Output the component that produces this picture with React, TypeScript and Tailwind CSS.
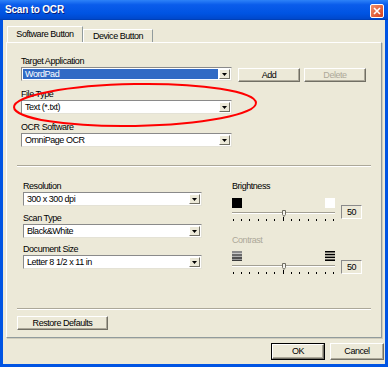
import React from "react";

const font = "font-['Liberation_Sans',Arial,sans-serif]";
const txt = "text-[9px] tracking-[-0.45px] leading-none";

function Combo({ value, className, selected }: { value: string; className: string; selected?: boolean }) {
  return (
    <div
      className={`flex h-[14px] items-stretch border border-t-[#8a8a8a] border-l-[#8a8a8a] border-b-[#e4e2d6] border-r-[#e4e2d6] bg-white ${className}`}
    >
      <div className="flex flex-1 p-[1px]">
        <div className={`flex flex-1 items-center pl-[2px] ${txt} ${selected ? "bg-[#316ac5] text-white" : "text-black"}`}>
          {value}
        </div>
      </div>
      <div className="my-[1px] mr-[1px] flex w-[11px] items-center justify-center border border-t-white border-l-white border-b-[#716f64] border-r-[#716f64] bg-[#ece9d8]">
        <svg width="5" height="3" viewBox="0 0 5 3">
          <path d="M0 0h5L2.5 3z" fill="#000" />
        </svg>
      </div>
    </div>
  );
}

function Button({ children, className, disabled, isDefault }: { children: React.ReactNode; className: string; disabled?: boolean; isDefault?: boolean }) {
  const inner = (
    <div
      className={`flex h-full w-full items-center justify-center border border-t-white border-l-white border-b-[#716f64] border-r-[#716f64] bg-[#ece9d8] shadow-[inset_-1px_-1px_0_#aca899] ${txt} ${
        disabled ? "text-[#aca899]" : "text-black"
      }`}
    >
      {children}
    </div>
  );
  if (isDefault) {
    return <div className={`border border-black ${className}`}>{inner}</div>;
  }
  return <div className={className}>{inner}</div>;
}

function Label({ children, gray }: { children: React.ReactNode; gray?: boolean }) {
  return <div className={`flex h-[12px] items-center ${txt} ${gray ? "text-[#aca899]" : "text-black"}`}>{children}</div>;
}

function Separator({ className }: { className: string }) {
  return <div className={`h-[2px] border-t border-t-[#aca899] border-b border-b-white ${className}`} />;
}

function Slider() {
  const ticks = Array.from({ length: 13 }, (_, i) => 0.5 + i * 8.37);
  return (
    <svg width="104" height="14" viewBox="0 0 104 14" className="block">
      <line x1="0" y1="3.5" x2="103" y2="3.5" stroke="#a3a094" />
      <line x1="0" y1="4.5" x2="103" y2="4.5" stroke="#ffffff" />
      <path d="M50.5 1.5h3v4l-1.5 2l-1.5-2z" fill="#f4f3ee" stroke="#6f6d62" />
      {ticks.map((x, i) => (
        <rect key={i} x={Math.round(x)} y={i === 6 ? 8 : 10} width="1" height={i === 6 ? 4 : 2} fill="#000" />
      ))}
    </svg>
  );
}

function ValueBox({ className }: { className: string }) {
  return (
    <div
      className={`flex h-[14px] w-[21px] items-center justify-center border border-t-[#8a8a8a] border-l-[#8a8a8a] border-b-white border-r-white text-black ${txt} ${className}`}
    >
      50
    </div>
  );
}

export default function App() {
  return (
    <div className={`relative flex h-[367px] w-[388px] flex-col bg-[#0054e3] ${font}`}>
      {/* title bar */}
      <div className="flex h-[20px] items-center justify-between border-b border-b-[#0040b8] bg-[linear-gradient(#2d82f8_0%,#0a5ceb_25%,#0054e3_70%,#0048cc_100%)] pl-[5px] pr-[4px]">
        <span className="text-[10px] font-bold tracking-[-0.2px] text-white [text-shadow:1px_1px_0_#0a1e7a]">Scan to OCR</span>
        <div className="mt-[2px] flex h-[14px] w-[14px] items-center justify-center rounded-[2px] border border-white bg-[linear-gradient(135deg,#f0906a,#d8401c)]">
          <svg width="8" height="8" viewBox="0 0 8 8">
            <path d="M1 1l6 6M7 1L1 7" stroke="#fff" strokeWidth="1.6" />
          </svg>
        </div>
      </div>

      {/* body */}
      <div className="mx-[3px] mb-[3px] flex flex-1 flex-col bg-[#ece9d8]">
        {/* tabs */}
        <div className="mt-[6px] flex h-[16px] items-end pl-[4px]">
          <div className={`flex h-[16px] w-[76px] items-center justify-center border border-b-0 border-t-white border-l-white border-r-[#919b9c] bg-[#ece9d8] text-black ${txt}`}>
            Software Button
          </div>
          <div className={`flex h-[13px] w-[70px] items-center justify-center border border-b-0 border-t-white border-l-white border-r-[#919b9c] text-black ${txt}`}>
            Device Button
          </div>
        </div>

        {/* panel */}
        <div className="ml-[3px] flex h-[296px] w-[376px] flex-col border border-t-white border-l-white border-b-[#919b9c] border-r-[#919b9c] shadow-[1px_1px_0_#d0cdbd]">
          <div className="ml-[14px] mt-[12px] flex flex-col">
            <Label>Target Application</Label>
            <div className="flex items-start">
              <Combo value="WordPad" selected className="w-[211px]" />
              <Button className="ml-[6px] mt-[1px] h-[14px] w-[62px]">Add</Button>
              <Button disabled className="ml-[4px] mt-[1px] h-[14px] w-[62px]">
                Delete
              </Button>
            </div>
            <div className="mt-[6px]">
              <Label>File Type</Label>
            </div>
            <Combo value="Text (*.txt)" className="w-[211px]" />
            <div className="mt-[7px]">
              <Label>OCR Software</Label>
            </div>
            <Combo value="OmniPage OCR" className="w-[211px]" />
          </div>

          <Separator className="mx-[10px] mt-[18px]" />

          <div className="mt-[13px] flex">
            <div className="ml-[16px] flex w-[179px] flex-col">
              <Label>Resolution</Label>
              <Combo value="300 x 300 dpi" className="w-[179px]" />
              <div className="mt-[6px]">
                <Label>Scan Type</Label>
              </div>
              <Combo value="Black&White" className="w-[179px]" />
              <div className="mt-[5px]">
                <Label>Document Size</Label>
              </div>
              <Combo value="Letter 8 1/2 x 11 in" className="w-[179px]" />
            </div>

            <div className="ml-[30px] flex flex-col">
              <Label>Brightness</Label>
              <div className="flex items-start">
                <div className="flex flex-col">
                  <div className="mt-[6px] flex h-[10px] w-[104px] justify-between pr-[1px]">
                    <div className="h-[10px] w-[10px] bg-black" />
                    <div className="h-[10px] w-[10px] bg-white" />
                  </div>
                  <div className="mt-[1px]">
                    <Slider />
                  </div>
                </div>
                <ValueBox className="ml-[5px] mt-[13px]" />
              </div>

              <div className="mt-[11px]">
                <Label gray>Contrast</Label>
              </div>
              <div className="flex items-start">
                <div className="flex flex-col">
                  <div className="mt-[5px] flex h-[10px] w-[104px] justify-between pr-[1px]">
                    <svg width="10" height="10" viewBox="0 0 10 10">
                      <rect x="0" y="0" width="10" height="2" fill="#8a8a8a" />
                      <rect x="0" y="2" width="10" height="1" fill="#c8c8c8" />
                      <rect x="0" y="3" width="10" height="2" fill="#6a6a6a" />
                      <rect x="0" y="5" width="10" height="1" fill="#b0b0b0" />
                      <rect x="0" y="6" width="10" height="2" fill="#505050" />
                      <rect x="0" y="8" width="10" height="1" fill="#9a9a9a" />
                      <rect x="0" y="9" width="10" height="1" fill="#3a3a3a" />
                    </svg>
                    <svg width="10" height="10" viewBox="0 0 10 10">
                      <rect x="0" y="0" width="10" height="1.5" fill="#000" />
                      <rect x="0" y="2.8" width="10" height="1.5" fill="#000" />
                      <rect x="0" y="5.6" width="10" height="1.5" fill="#000" />
                      <rect x="0" y="8.4" width="10" height="1.6" fill="#000" />
                    </svg>
                  </div>
                  <div className="mt-[1px]">
                    <Slider />
                  </div>
                </div>
                <ValueBox className="ml-[5px] mt-[14px]" />
              </div>
            </div>
          </div>

          <Separator className="mx-[10px] mt-auto" />
          <Button className="mb-[7px] ml-[10px] mt-[6px] h-[14px] w-[91px]">Restore Defaults</Button>
        </div>

        {/* dialog buttons */}
        <div className="mt-[5px] flex justify-end gap-[5px] pr-[1px]">
          <Button isDefault className="h-[17px] w-[54px]">
            OK
          </Button>
          <Button className="h-[17px] w-[54px]">Cancel</Button>
        </div>
      </div>

      {/* red annotation ellipse */}
      <svg className="pointer-events-none absolute left-[12px] top-[82px]" width="246" height="46" viewBox="0 0 246 46">
        <ellipse cx="123" cy="23" rx="121" ry="21" fill="none" stroke="#ff0000" strokeWidth="2" transform="rotate(-1 123 23)" />
      </svg>
    </div>
  );
}
